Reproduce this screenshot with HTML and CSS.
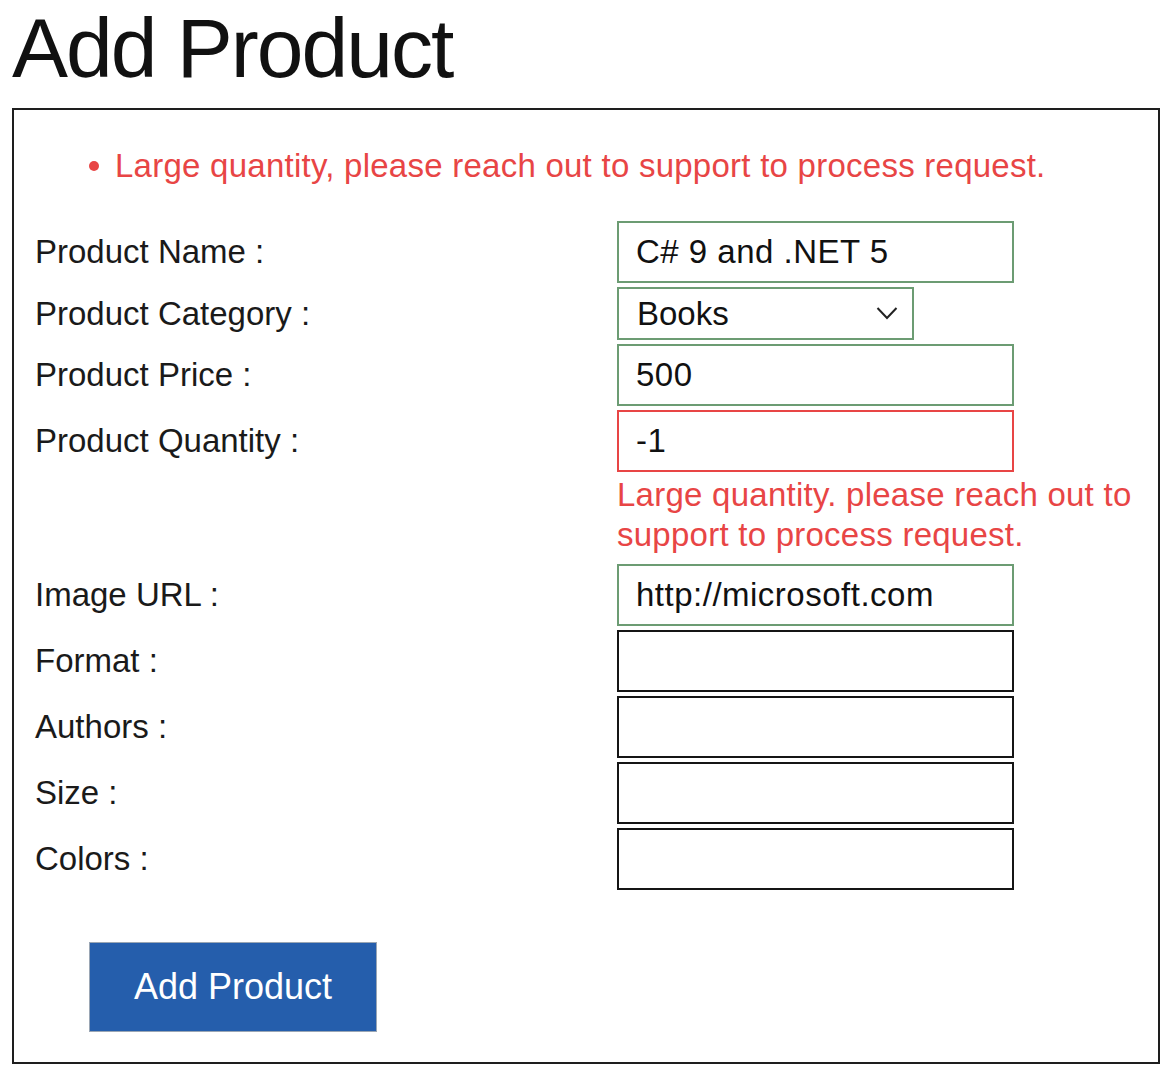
FILE: index.html
```html
<!DOCTYPE html>
<html lang="en">
<head>
<meta charset="utf-8">
<title>Add Product</title>
<link rel="stylesheet" href="styles.css">
</head>
<body>
<h1 class="title">Add Product</h1>
<form class="panel">
  <ul class="summary">
    <li class="summary-item"><span class="dot"></span>Large quantity, please reach out to support to process request.</li>
  </ul>
  <div class="rows">
    <div class="row">
      <label class="lbl">Product Name :</label>
      <div class="field"><input class="inp valid" type="text" value="C# 9 and .NET 5"></div>
    </div>
    <div class="row">
      <label class="lbl lbl-short">Product Category :</label>
      <div class="field">
        <div class="select-wrap">
          <select class="sel valid"><option>Books</option></select>
          <svg class="chev" width="22" height="14" viewBox="0 0 22 14"><path d="M1.5 2 L11 12 L20.5 2" fill="none" stroke="#222" stroke-width="2"/></svg>
        </div>
      </div>
    </div>
    <div class="row">
      <label class="lbl">Product Price :</label>
      <div class="field"><input class="inp valid" type="text" value="500"></div>
    </div>
    <div class="row">
      <label class="lbl">Product Quantity :</label>
      <div class="field">
        <input class="inp invalid" type="text" value="-1">
        <div class="msg">Large quantity. please reach out to support to process request.</div>
      </div>
    </div>
    <div class="row">
      <label class="lbl">Image URL :</label>
      <div class="field"><input class="inp valid" type="text" value="http://microsoft.com"></div>
    </div>
    <div class="row">
      <label class="lbl">Format :</label>
      <div class="field"><input class="inp plain" type="text" value=""></div>
    </div>
    <div class="row">
      <label class="lbl">Authors :</label>
      <div class="field"><input class="inp plain" type="text" value=""></div>
    </div>
    <div class="row">
      <label class="lbl">Size :</label>
      <div class="field"><input class="inp plain" type="text" value=""></div>
    </div>
    <div class="row">
      <label class="lbl">Colors :</label>
      <div class="field"><input class="inp plain" type="text" value=""></div>
    </div>
  </div>
  <button class="btn" type="button">Add Product</button>
</form>
</body>
</html>
```
FILE: styles.css
```css
html, body {
  margin: 0;
  background: #ffffff;
}
body {
  padding: 0 10px 0 12px;
  font-family: "Liberation Sans", Arial, sans-serif;
  color: #1a1a1a;
}
.title {
  margin: 0 0 12px;
  font-size: 84px;
  line-height: 96px;
  font-weight: 400;
  letter-spacing: -2px;
  color: #111;
}
.panel {
  border: 2px solid #1e1e1e;
  padding: 0 0 30px 21px;
  display: flex;
  flex-direction: column;
  align-items: flex-start;
}
.summary {
  list-style: none;
  margin: 36px 0 35px;
  padding: 0 0 0 54px;
}
.summary-item {
  display: flex;
  align-items: center;
  gap: 16px;
  font-size: 33px;
  line-height: 40px;
  letter-spacing: 0.25px;
  color: #e84545;
}
.dot {
  width: 10px;
  height: 10px;
  border-radius: 50%;
  background: #e84545;
  flex: none;
}
.rows {
  display: flex;
  flex-direction: column;
  gap: 4px;
  width: 100%;
}
.row {
  display: grid;
  grid-template-columns: 582px 1fr;
  align-items: start;
}
.lbl {
  height: 62px;
  display: flex;
  align-items: center;
  font-size: 33px;
  color: #1a1a1a;
}
.lbl-short {
  height: 53px;
}
.field {
  display: flex;
  flex-direction: column;
  align-items: flex-start;
}
.inp {
  box-sizing: border-box;
  width: 397px;
  height: 62px;
  margin: 0;
  padding: 0 0 0 17px;
  font-family: "Liberation Sans", Arial, sans-serif;
  font-size: 33px;
  letter-spacing: 0.5px;
  color: #111;
  background: #fff;
  outline: none;
  border-radius: 0;
}
.valid {
  border: 2px solid #6c9c73;
}
.invalid {
  border: 2px solid #e84545;
}
.plain {
  border: 2px solid #151515;
}
.select-wrap {
  position: relative;
  width: 297px;
  height: 53px;
}
.sel {
  -webkit-appearance: none;
  appearance: none;
  box-sizing: border-box;
  width: 297px;
  height: 53px;
  margin: 0;
  padding: 0 0 0 18px;
  font-family: "Liberation Sans", Arial, sans-serif;
  font-size: 33px;
  color: #111;
  background: #fff;
  border-radius: 0;
  outline: none;
}
.chev {
  position: absolute;
  right: 16px;
  top: 19px;
  pointer-events: none;
}
.msg {
  margin: 3px 0 5px;
  font-size: 33px;
  line-height: 40px;
  letter-spacing: 0.25px;
  color: #e84545;
}
.btn {
  margin: 52px 0 0 54px;
  width: 288px;
  height: 90px;
  background: #255eac;
  border: 1px solid #9aa6b4;
  color: #fff;
  font-family: "Liberation Sans", Arial, sans-serif;
  font-size: 36px;
  padding: 0;
  border-radius: 0;
}
```
